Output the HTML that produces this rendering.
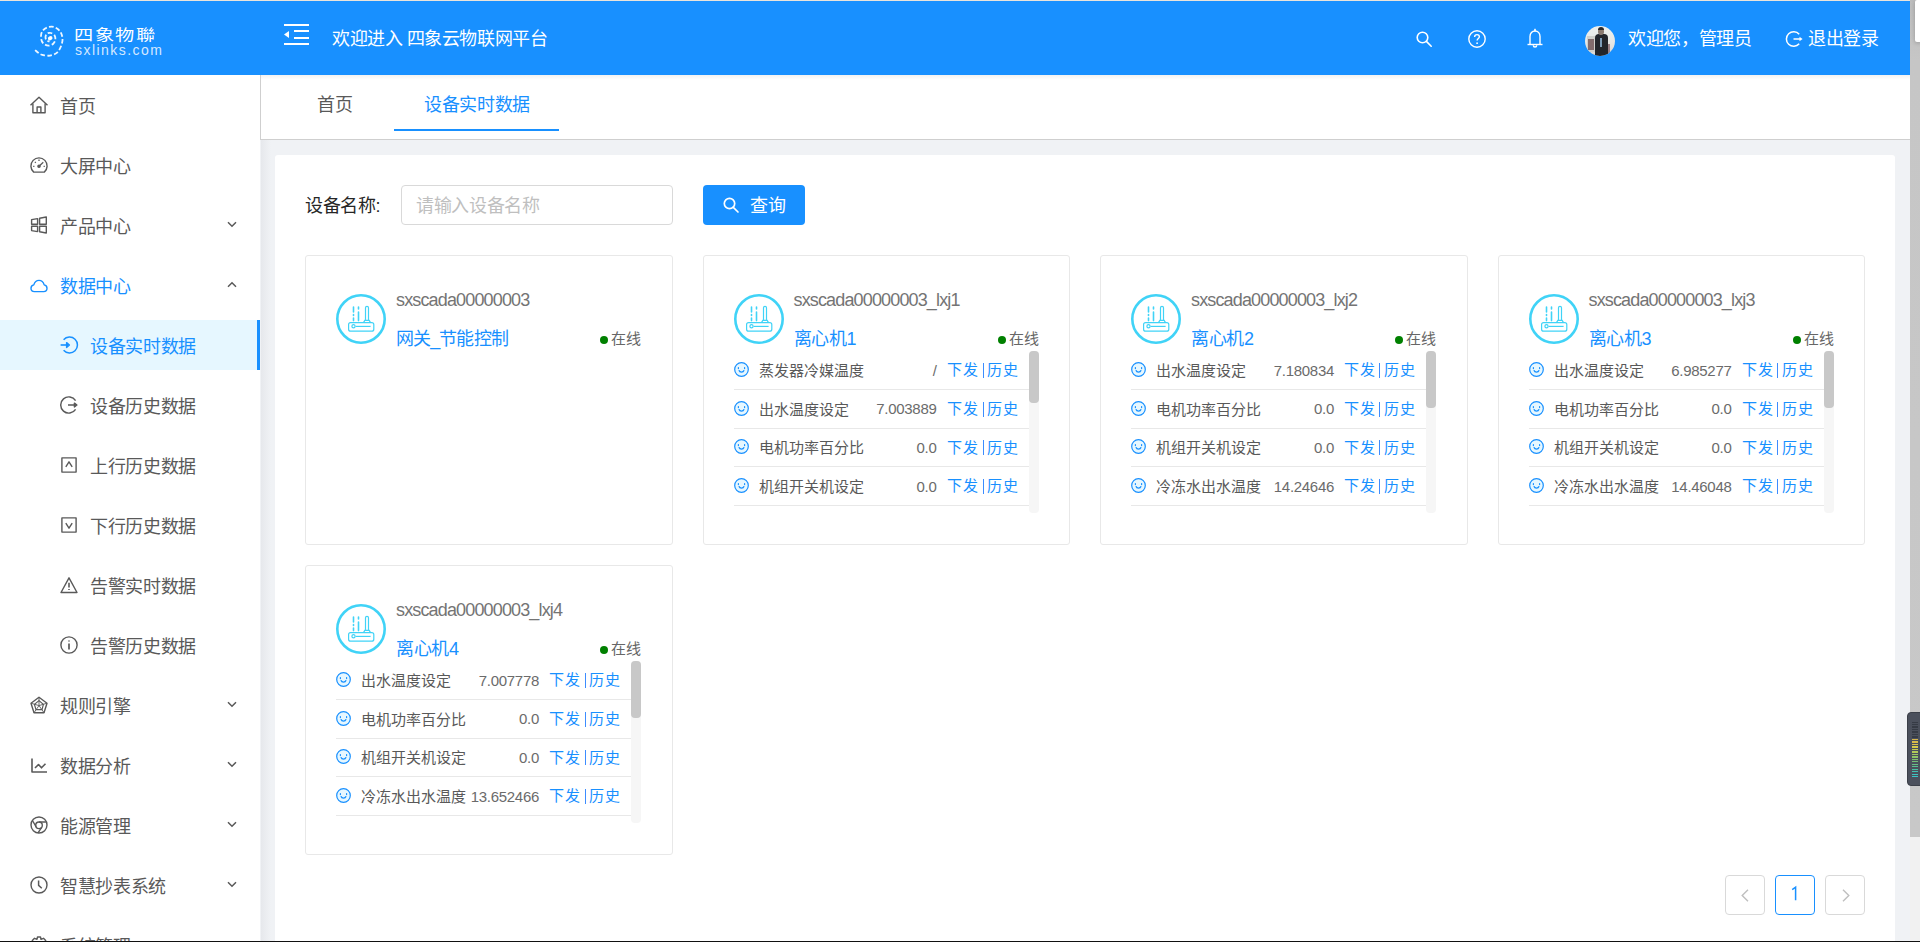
<!DOCTYPE html>
<html lang="zh-CN">
<head>
<meta charset="utf-8">
<style>
*{margin:0;padding:0;box-sizing:border-box}
html,body{width:1920px;height:942px;overflow:hidden;background:#f0f2f5;font-family:"Liberation Sans",sans-serif;color:#595959}
.abs{position:absolute}
.t{white-space:nowrap}
svg{position:absolute;overflow:visible}
</style>
</head>
<body>
<div class="abs" style="left:0;top:0;width:1910px;height:1px;background:#e9e4dc"></div>
<div class="abs" style="left:0;top:1px;width:1910px;height:74px;background:#1890ff"></div>
<div class="abs" style="left:0;top:75px;width:260px;height:867px;background:#fff"></div>
<div class="abs" style="left:260px;top:75px;width:1650px;height:65px;background:#fff;border-left:1px solid #cfcfcf;border-bottom:1px solid #cfcfcf"></div>
<div class="abs" style="left:261px;top:75px;width:1649px;height:5px;background:linear-gradient(180deg,#f2f2f2,#fff)"></div>
<div class="abs" style="left:261px;top:140px;width:10px;height:802px;background:linear-gradient(90deg,#e6e8ec,#f0f2f5)"></div>
<div class="abs" style="left:275px;top:155px;width:1620px;height:800px;background:#fff;border-radius:3px"></div>
<svg style="left:0;top:0" width="80" height="70" viewBox="0 0 80 70">
<path d="M35.1 50.1 C35.75 50.63 37.68 52.48 39 53.3 C40.32 54.12 41.17 54.62 43 55 C44.83 55.38 47.67 56.00 50 55.6 C52.33 55.20 55.12 54.28 57 52.6 C58.88 50.92 60.38 47.90 61.3 45.5 C62.22 43.10 62.72 40.58 62.5 38.2 C62.28 35.82 61.42 33.07 60 31.2 C58.58 29.33 56.17 27.62 54 27 C51.83 26.38 48.92 26.83 47 27.5 C45.08 28.17 43.50 29.58 42.5 31 C41.50 32.42 41.08 34.25 41 36 C40.92 37.75 41.33 40.07 42 41.5 C42.67 42.93 43.83 43.92 45 44.6 C46.17 45.28 47.67 45.70 49 45.6 C50.33 45.50 51.95 44.93 53 44 C54.05 43.07 55.03 41.42 55.3 40 C55.57 38.58 55.32 36.67 54.6 35.5 C53.88 34.33 52.27 33.33 51 33 C49.73 32.67 47.92 32.83 47 33.5 C46.08 34.17 45.58 35.87 45.5 37 C45.42 38.13 45.83 39.53 46.5 40.3 C47.17 41.07 49.00 41.38 49.5 41.6" fill="none" stroke="#fff" stroke-width="1.8" stroke-linecap="butt" stroke-dasharray="4.6 2.3" opacity="0.93"/>
<ellipse cx="50.2" cy="38.3" rx="2.4" ry="2" fill="#fff" transform="rotate(-30 50.2 38.3)"/>
</svg>
<div class="abs t" style="left:74px;top:27.5px;font-size:16px;line-height:16px;color:#fff;letter-spacing:1.2px;transform:scale(1.2,0.95);transform-origin:0 0">四象物聯</div>
<div class="abs t" style="left:75px;top:43px;font-size:14px;line-height:14px;color:rgba(255,255,255,.82);letter-spacing:1.45px">sxlinks.com</div>
<svg style="left:284px;top:23px" width="25" height="22" viewBox="0 0 25 22">
<g fill="#fff"><rect x="0" y="1" width="25" height="2"/><rect x="10" y="7" width="15" height="2"/><rect x="10" y="14" width="15" height="2"/><rect x="0" y="20" width="25" height="2"/>
<path d="M0 11.5 L5 8 L5 15 Z"/></g></svg>
<div class="abs t" style="left:332px;top:30.2px;font-size:18px;line-height:18px;color:#fff;letter-spacing:-0.35px;letter-spacing:-0.45px">欢迎进入 四象云物联网平台</div>
<svg style="left:1416px;top:31px" width="16" height="16" viewBox="0 0 16 16">
<g fill="none" stroke="#fff" stroke-width="1.6"><circle cx="6.5" cy="6.5" r="5.3"/><path d="M10.4 10.4 L15.2 15.2" stroke-linecap="round"/></g></svg>
<svg style="left:1468px;top:30px" width="18" height="18" viewBox="0 0 18 18">
<g fill="none" stroke="#fff" stroke-width="1.4"><circle cx="9" cy="9" r="8.2"/><path d="M6.6 7 C6.6 5.4 7.7 4.6 9 4.6 C10.4 4.6 11.4 5.5 11.4 6.8 C11.4 8.4 9.1 8.6 9.1 10.6"/></g>
<circle cx="9.1" cy="13.2" r="0.9" fill="#fff"/></svg>
<svg style="left:1527px;top:28px" width="16" height="20" viewBox="0 0 16 20">
<g fill="none" stroke="#fff" stroke-width="1.4"><path d="M3 16.5 L3 8.5 C3 5.2 5.2 3 8 3 C10.8 3 13 5.2 13 8.5 L13 16.5"/><path d="M0.5 16.5 L15.5 16.5"/><path d="M6.3 17.2 C6.3 18.3 7 19 8 19 C9 19 9.7 18.3 9.7 17.2"/></g>
<rect x="7.2" y="0.8" width="1.6" height="2.4" fill="#fff"/></svg>
<div class="abs" style="left:1585px;top:26px;width:30px;height:30px;border-radius:50%;overflow:hidden;background:linear-gradient(180deg,#eef0ee 0%,#e6e7e5 55%,#d9d5cf 100%)">
<div class="abs" style="left:2px;top:10px;width:10px;height:16px;background:#d0d0cc"></div>
<div class="abs" style="left:3px;top:13px;width:6px;height:11px;background:#6a4b4e;opacity:.75"></div>
<div class="abs" style="left:21px;top:18px;width:4px;height:10px;background:#7a5560;opacity:.7"></div>
<div class="abs" style="left:10px;top:8px;width:12.5px;height:23px;background:#22252b;border-radius:4px 4px 0 0"></div>
<div class="abs" style="left:15px;top:12px;width:2px;height:9px;background:#7d9cb8"></div>
<div class="abs" style="left:12.5px;top:1.5px;width:6px;height:7px;background:#8a7a70;border-radius:45%"></div>
<div class="abs" style="left:12.5px;top:1px;width:6px;height:3px;background:#2a2a2c;border-radius:3px 3px 0 0"></div>
</div>
<div class="abs t" style="left:1628px;top:30.0px;font-size:18px;line-height:18px;color:#fff;letter-spacing:-0.35px;">欢迎您，管理员</div>
<svg style="left:1785px;top:30px" width="18" height="18" viewBox="0 0 18 18">
<g fill="none" stroke="#fff" stroke-width="1.5"><path d="M14.2 4.2 A7.3 7.3 0 1 0 14.2 13.8"/><path d="M8.5 9 L15.5 9"/></g>
<path d="M14.5 6.8 L17.6 9 L14.5 11.2 Z" fill="#fff"/></svg>
<div class="abs t" style="left:1808px;top:30.2px;font-size:18px;line-height:18px;color:#fff;letter-spacing:-0.35px;">退出登录</div>
<div class="abs" style="left:0;top:320px;width:260px;height:50px;background:#e6f7ff"></div>
<div class="abs" style="left:257px;top:320px;width:3px;height:50px;background:#1890ff"></div>
<svg style="left:30px;top:96px" width="18" height="18" viewBox="0 0 18 18"><g fill="none" stroke="#595959" stroke-width="1.4" stroke-linejoin="round"><path d="M0.5 9.3 L9 1.3 L17.5 9.3"/><path d="M2.9 7.6 L2.9 16.7 L15.1 16.7 L15.1 7.6"/><path d="M7.1 16.7 L7.1 11 L10.9 11 L10.9 16.7"/></g></svg>
<div class="abs t" style="left:60px;top:97.7px;font-size:18px;line-height:18px;color:#595959;letter-spacing:-0.35px;">首页</div>
<svg style="left:30px;top:156px" width="18" height="18" viewBox="0 0 18 18"><g fill="none" stroke="#595959" stroke-width="1.4" stroke-linejoin="round"><path d="M3.7 16.1 A8.1 8.1 0 1 1 14.3 16.1 Z"/><path d="M9 10.3 L13.3 6.2" stroke-width="1.2"/><circle cx="9" cy="10.3" r="1.1" fill="#595959"/><path d="M9 3.6 L9 4.9 M3.2 10.3 L4.4 10.3 M13.6 10.3 L14.8 10.3 M4.9 5.9 L5.8 6.8" stroke-width="1.3"/></g></svg>
<div class="abs t" style="left:60px;top:157.7px;font-size:18px;line-height:18px;color:#595959;letter-spacing:-0.35px;">大屏中心</div>
<svg style="left:30px;top:216px" width="18" height="18" viewBox="0 0 18 18"><g fill="none" stroke="#595959" stroke-width="1.4" stroke-linejoin="round"><path d="M1.6 3.6 L7.6 2.6 L7.6 8.2 L1.6 8.2 Z"/><path d="M9.6 2.3 L16.3 1 L16.3 8.2 L9.6 8.2 Z"/><path d="M1.6 10.2 L7.6 10.2 L7.6 15.6 L1.6 14.6 Z"/><path d="M9.6 10.2 L16.3 10.2 L16.3 17 L9.6 15.8 Z"/></g></svg>
<div class="abs t" style="left:60px;top:217.7px;font-size:18px;line-height:18px;color:#595959;letter-spacing:-0.35px;">产品中心</div>
<svg style="left:227px;top:221px" width="10" height="7" viewBox="0 0 10 7"><path d="M1 1.2 L5 5.2 L9 1.2" fill="none" stroke="#595959" stroke-width="1.5"/></svg>
<svg style="left:30px;top:276px" width="18" height="18" viewBox="0 0 18 18"><g fill="none" stroke="#1890ff" stroke-width="1.4" stroke-linejoin="round"><path d="M4.4 15.6 C2.4 15.6 1 14.1 1 12.3 C1 10.5 2.3 9.2 3.8 8.9 C4.6 6.2 6.6 4.4 9 4.4 C11.4 4.4 13.4 6.2 14.2 8.9 C15.7 9.2 17 10.5 17 12.3 C17 14.1 15.6 15.6 13.6 15.6 Z"/></g></svg>
<div class="abs t" style="left:60px;top:277.7px;font-size:18px;line-height:18px;color:#1890ff;letter-spacing:-0.35px;">数据中心</div>
<svg style="left:227px;top:281px" width="10" height="7" viewBox="0 0 10 7"><path d="M1 5.8 L5 1.8 L9 5.8" fill="none" stroke="#595959" stroke-width="1.5"/></svg>
<svg style="left:60px;top:336px" width="18" height="18" viewBox="0 0 18 18"><g fill="none" stroke="#1890ff" stroke-width="1.4" stroke-linejoin="round"><path d="M3.6 3.8 A7.9 7.9 0 1 1 3.6 14.2" stroke-width="1.5"/><path d="M0.6 9 L7 9" stroke-width="1.6"/><path d="M6.6 6.6 L9.4 9 L6.6 11.4 Z" fill="#1890ff"/></g></svg>
<div class="abs t" style="left:90px;top:337.7px;font-size:18px;line-height:18px;color:#1890ff;letter-spacing:-0.35px;">设备实时数据</div>
<svg style="left:60px;top:396px" width="18" height="18" viewBox="0 0 18 18"><g fill="none" stroke="#595959" stroke-width="1.4" stroke-linejoin="round"><path d="M15.6 4.6 A8.1 8.1 0 1 0 15.6 13.4" stroke-width="1.45"/><path d="M8 9 L14.8 9" stroke-width="1.5"/><path d="M14.4 7.1 L16.9 9 L14.4 10.9 Z" fill="#595959"/></g></svg>
<div class="abs t" style="left:90px;top:397.7px;font-size:18px;line-height:18px;color:#595959;letter-spacing:-0.35px;">设备历史数据</div>
<svg style="left:60px;top:456px" width="18" height="18" viewBox="0 0 18 18"><g fill="none" stroke="#595959" stroke-width="1.4" stroke-linejoin="round"><rect x="1.9" y="1.9" width="14.2" height="14.2"/><path d="M5.8 10.8 L9 5.8 L12.2 10.8"/></g></svg>
<div class="abs t" style="left:90px;top:457.7px;font-size:18px;line-height:18px;color:#595959;letter-spacing:-0.35px;">上行历史数据</div>
<svg style="left:60px;top:516px" width="18" height="18" viewBox="0 0 18 18"><g fill="none" stroke="#595959" stroke-width="1.4" stroke-linejoin="round"><rect x="1.9" y="1.9" width="14.2" height="14.2"/><path d="M5.8 7.2 L9 12.2 L12.2 7.2"/></g></svg>
<div class="abs t" style="left:90px;top:517.7px;font-size:18px;line-height:18px;color:#595959;letter-spacing:-0.35px;">下行历史数据</div>
<svg style="left:60px;top:576px" width="18" height="18" viewBox="0 0 18 18"><g fill="none" stroke="#595959" stroke-width="1.4" stroke-linejoin="round"><path d="M9 1.8 L17 16.5 L1 16.5 Z"/><path d="M9 6.8 L9 11.4" stroke-width="1.6"/><path d="M9 12.9 L9 14" stroke-width="1.6"/></g></svg>
<div class="abs t" style="left:90px;top:577.7px;font-size:18px;line-height:18px;color:#595959;letter-spacing:-0.35px;">告警实时数据</div>
<svg style="left:60px;top:636px" width="18" height="18" viewBox="0 0 18 18"><g fill="none" stroke="#595959" stroke-width="1.4" stroke-linejoin="round"><circle cx="9" cy="9" r="8.1"/><path d="M9 7.5 L9 13.5" stroke-width="1.7"/><path d="M9 4.6 L9 5.6" stroke-width="1.7"/></g></svg>
<div class="abs t" style="left:90px;top:637.7px;font-size:18px;line-height:18px;color:#595959;letter-spacing:-0.35px;">告警历史数据</div>
<svg style="left:30px;top:696px" width="18" height="18" viewBox="0 0 18 18"><g fill="none" stroke="#595959" stroke-width="1.4" stroke-linejoin="round"><path d="M9 1.3 L17 7.2 L14 16.7 L4 16.7 L1 7.2 Z" stroke-width="1.4"/><path d="M9 4.6 L13.4 8.4 L12 13.6 L6 13.6 L4.4 8.4 Z" stroke-width="1.2"/><path d="M9 9.6 L9 1.3 M9 9.6 L17 7.2 M9 9.6 L14 16.7 M9 9.6 L4 16.7 M9 9.6 L1 7.2" stroke-width="0.9"/></g></svg>
<div class="abs t" style="left:60px;top:697.7px;font-size:18px;line-height:18px;color:#595959;letter-spacing:-0.35px;">规则引擎</div>
<svg style="left:227px;top:701px" width="10" height="7" viewBox="0 0 10 7"><path d="M1 1.2 L5 5.2 L9 1.2" fill="none" stroke="#595959" stroke-width="1.5"/></svg>
<svg style="left:30px;top:756px" width="18" height="18" viewBox="0 0 18 18"><g fill="none" stroke="#595959" stroke-width="1.4" stroke-linejoin="round"><path d="M2 2.5 L2 16 L17 16" stroke-width="1.6"/><path d="M5 12 L8.5 8.5 L11.5 11.8 L15.5 7.8" stroke-width="1.6"/></g></svg>
<div class="abs t" style="left:60px;top:757.7px;font-size:18px;line-height:18px;color:#595959;letter-spacing:-0.35px;">数据分析</div>
<svg style="left:227px;top:761px" width="10" height="7" viewBox="0 0 10 7"><path d="M1 1.2 L5 5.2 L9 1.2" fill="none" stroke="#595959" stroke-width="1.5"/></svg>
<svg style="left:30px;top:816px" width="18" height="18" viewBox="0 0 18 18"><g fill="none" stroke="#595959" stroke-width="1.4" stroke-linejoin="round"><circle cx="9" cy="9" r="8"/><circle cx="9" cy="9.3" r="3.3"/><path d="M9 6 L15.9 6 M6.2 10.8 L2.4 4.5 M11.5 11.6 L8 16.9"/></g></svg>
<div class="abs t" style="left:60px;top:817.7px;font-size:18px;line-height:18px;color:#595959;letter-spacing:-0.35px;">能源管理</div>
<svg style="left:227px;top:821px" width="10" height="7" viewBox="0 0 10 7"><path d="M1 1.2 L5 5.2 L9 1.2" fill="none" stroke="#595959" stroke-width="1.5"/></svg>
<svg style="left:30px;top:876px" width="18" height="18" viewBox="0 0 18 18"><g fill="none" stroke="#595959" stroke-width="1.4" stroke-linejoin="round"><circle cx="9" cy="9" r="8"/><path d="M8.6 4.6 L8.6 9.4 L11.8 12.2" stroke-width="1.5"/></g></svg>
<div class="abs t" style="left:60px;top:877.7px;font-size:18px;line-height:18px;color:#595959;letter-spacing:-0.35px;">智慧抄表系统</div>
<svg style="left:227px;top:881px" width="10" height="7" viewBox="0 0 10 7"><path d="M1 1.2 L5 5.2 L9 1.2" fill="none" stroke="#595959" stroke-width="1.5"/></svg>
<svg style="left:30px;top:936px" width="18" height="18" viewBox="0 0 18 18"><g fill="none" stroke="#595959" stroke-width="1.4" stroke-linejoin="round"><circle cx="9" cy="9" r="3"/><path d="M7.5 1 L10.5 1 L11 3.3 L13.5 2.3 L15.7 4.5 L14.7 7 L17 7.5 L17 10.5 L14.7 11 L15.7 13.5 L13.5 15.7 L11 14.7 L10.5 17 L7.5 17 L7 14.7 L4.5 15.7 L2.3 13.5 L3.3 11 L1 10.5 L1 7.5 L3.3 7 L2.3 4.5 L4.5 2.3 L7 3.3 Z"/></g></svg>
<div class="abs t" style="left:60px;top:937.7px;font-size:18px;line-height:18px;color:#595959;letter-spacing:-0.35px;">系统管理</div>
<svg style="left:227px;top:941px" width="10" height="7" viewBox="0 0 10 7"><path d="M1 1.2 L5 5.2 L9 1.2" fill="none" stroke="#595959" stroke-width="1.5"/></svg>
<div class="abs t" style="left:317px;top:96.4px;font-size:18px;line-height:18px;color:#595959;letter-spacing:-0.35px;">首页</div>
<div class="abs t" style="left:424px;top:96.4px;font-size:18px;line-height:18px;color:#1890ff;letter-spacing:-0.35px;">设备实时数据</div>
<div class="abs" style="left:394px;top:129px;width:165px;height:2px;background:#1890ff"></div>
<div class="abs t" style="left:305px;top:197.1px;font-size:18px;line-height:18px;color:#262626;letter-spacing:-0.35px;">设备名称:</div>
<div class="abs" style="left:401px;top:185px;width:272px;height:40px;border:1px solid #d9d9d9;border-radius:4px;background:#fff"></div>
<div class="abs t" style="left:416px;top:197.2px;font-size:18px;line-height:18px;color:#bfbfbf;letter-spacing:-0.35px;">请输入设备名称</div>
<div class="abs" style="left:703px;top:185px;width:102px;height:40px;border-radius:4px;background:#1890ff"></div>
<svg style="left:723px;top:197px" width="16" height="16" viewBox="0 0 16 16">
<g fill="none" stroke="#fff" stroke-width="1.7"><circle cx="6.5" cy="6.5" r="5.2"/><path d="M10.3 10.3 L15 15" stroke-linecap="round"/></g></svg>
<div class="abs t" style="left:750px;top:197.2px;font-size:18px;line-height:18px;color:#fff;letter-spacing:-0.35px;">查询</div>
<div class="abs" style="left:305px;top:255px;width:367.5px;height:290px;border:1px solid #e8e8e8;border-radius:3px;background:#fff"></div>
<svg style="left:336px;top:294px" width="50" height="50" viewBox="0 0 50 50">
<circle cx="25" cy="25" r="23.7" fill="none" stroke="#40d3f7" stroke-width="2.6"/>
<g fill="none" stroke="#40d3f7" stroke-width="1.2">
<rect x="12.6" y="28.6" width="25.2" height="8.6" rx="2"/>
<circle cx="17.5" cy="32.3" r="1.6"/><path d="M19.6 32.4 L34.6 32.4"/>
<path d="M29.5 26.4 L29.5 13.8 A1.5 1.5 0 0 1 32.5 13.8 L32.5 26.4"/>
<path d="M27.5 28.6 L28.8 26.4 L33.2 26.4 L34.5 28.6"/>
</g>
<g stroke="#40d3f7" stroke-width="1.6" stroke-linecap="round">
<path d="M17.5 13 L17.5 18 M17.5 20.5 L17.5 21.5 M17.5 24 L17.5 26.6"/>
<path d="M22.5 13 L22.5 15 M22.5 18 L22.5 26.6"/>
</g></svg>
<div class="abs t" style="left:396px;top:291px;font-size:18px;line-height:18px;color:#747474;letter-spacing:-0.85px">sxscada00000003</div>
<div class="abs t" style="left:396px;top:329.5px;font-size:18px;line-height:18px;color:#1890ff;letter-spacing:-0.35px;letter-spacing:-0.9px">网关_节能控制</div>
<div class="abs" style="left:600px;top:336px;width:8px;height:8px;border-radius:50%;background:#008000"></div>
<div class="abs t" style="left:611px;top:330.8px;font-size:15px;line-height:15px;color:#666;">在线</div>
<div class="abs" style="left:702.5px;top:255px;width:367.5px;height:290px;border:1px solid #e8e8e8;border-radius:3px;background:#fff"></div>
<svg style="left:733.5px;top:294px" width="50" height="50" viewBox="0 0 50 50">
<circle cx="25" cy="25" r="23.7" fill="none" stroke="#40d3f7" stroke-width="2.6"/>
<g fill="none" stroke="#40d3f7" stroke-width="1.2">
<rect x="12.6" y="28.6" width="25.2" height="8.6" rx="2"/>
<circle cx="17.5" cy="32.3" r="1.6"/><path d="M19.6 32.4 L34.6 32.4"/>
<path d="M29.5 26.4 L29.5 13.8 A1.5 1.5 0 0 1 32.5 13.8 L32.5 26.4"/>
<path d="M27.5 28.6 L28.8 26.4 L33.2 26.4 L34.5 28.6"/>
</g>
<g stroke="#40d3f7" stroke-width="1.6" stroke-linecap="round">
<path d="M17.5 13 L17.5 18 M17.5 20.5 L17.5 21.5 M17.5 24 L17.5 26.6"/>
<path d="M22.5 13 L22.5 15 M22.5 18 L22.5 26.6"/>
</g></svg>
<div class="abs t" style="left:793.5px;top:291px;font-size:18px;line-height:18px;color:#747474;letter-spacing:-0.85px">sxscada00000003_lxj1</div>
<div class="abs t" style="left:793.5px;top:329.5px;font-size:18px;line-height:18px;color:#1890ff;letter-spacing:-0.35px;">离心机1</div>
<div class="abs" style="left:997.5px;top:336px;width:8px;height:8px;border-radius:50%;background:#008000"></div>
<div class="abs t" style="left:1008.5px;top:330.8px;font-size:15px;line-height:15px;color:#666;">在线</div>
<div class="abs" style="left:1028.5px;top:351px;width:10px;height:162px;background:#f6f6f6;border-radius:4px"></div>
<div class="abs" style="left:1028.5px;top:351px;width:10px;height:52px;background:#c8c8c8;border-radius:4px"></div>
<svg style="left:733.5px;top:362.0px" width="15" height="15" viewBox="0 0 15 15">
<circle cx="7.5" cy="7.5" r="6.8" fill="#e6f7ff" stroke="#1890ff" stroke-width="1.2"/>
<path d="M4.4 5.5 L4.4 6.6 M10.6 5.5 L10.6 6.6" stroke="#1890ff" stroke-width="1.2" stroke-linecap="round"/>
<path d="M5.1 8.5 C5.6 10.6 9.4 10.6 9.9 8.5" fill="none" stroke="#1890ff" stroke-width="1.2" stroke-linecap="round"/></svg>
<div class="abs t" style="left:758.5px;top:362.9px;font-size:15px;line-height:15px;color:#595959;">蒸发器冷媒温度</div>
<div class="abs t" style="left:836.5px;top:362.5px;width:100px;text-align:right;font-size:15px;line-height:15px;color:#6b6b6b;letter-spacing:-0.3px">/</div>
<div class="abs t" style="left:946.5px;top:362.3px;font-size:15px;line-height:15px;color:#1890ff;letter-spacing:1.2px">下发</div>
<div class="abs" style="left:983px;top:363.0px;width:1px;height:15px;background:#3d8cff"></div>
<div class="abs t" style="left:986.5px;top:362.3px;font-size:15px;line-height:15px;color:#1890ff;letter-spacing:1.2px">历史</div>
<div class="abs" style="left:733.5px;top:389.0px;width:295px;height:1px;background:#e8e8e8"></div>
<svg style="left:733.5px;top:400.67px" width="15" height="15" viewBox="0 0 15 15">
<circle cx="7.5" cy="7.5" r="6.8" fill="#e6f7ff" stroke="#1890ff" stroke-width="1.2"/>
<path d="M4.4 5.5 L4.4 6.6 M10.6 5.5 L10.6 6.6" stroke="#1890ff" stroke-width="1.2" stroke-linecap="round"/>
<path d="M5.1 8.5 C5.6 10.6 9.4 10.6 9.9 8.5" fill="none" stroke="#1890ff" stroke-width="1.2" stroke-linecap="round"/></svg>
<div class="abs t" style="left:758.5px;top:401.6px;font-size:15px;line-height:15px;color:#595959;">出水温度设定</div>
<div class="abs t" style="left:836.5px;top:401.2px;width:100px;text-align:right;font-size:15px;line-height:15px;color:#6b6b6b;letter-spacing:-0.3px">7.003889</div>
<div class="abs t" style="left:946.5px;top:401.0px;font-size:15px;line-height:15px;color:#1890ff;letter-spacing:1.2px">下发</div>
<div class="abs" style="left:983px;top:401.7px;width:1px;height:15px;background:#3d8cff"></div>
<div class="abs t" style="left:986.5px;top:401.0px;font-size:15px;line-height:15px;color:#1890ff;letter-spacing:1.2px">历史</div>
<div class="abs" style="left:733.5px;top:427.7px;width:295px;height:1px;background:#e8e8e8"></div>
<svg style="left:733.5px;top:439.34000000000003px" width="15" height="15" viewBox="0 0 15 15">
<circle cx="7.5" cy="7.5" r="6.8" fill="#e6f7ff" stroke="#1890ff" stroke-width="1.2"/>
<path d="M4.4 5.5 L4.4 6.6 M10.6 5.5 L10.6 6.6" stroke="#1890ff" stroke-width="1.2" stroke-linecap="round"/>
<path d="M5.1 8.5 C5.6 10.6 9.4 10.6 9.9 8.5" fill="none" stroke="#1890ff" stroke-width="1.2" stroke-linecap="round"/></svg>
<div class="abs t" style="left:758.5px;top:440.2px;font-size:15px;line-height:15px;color:#595959;">电机功率百分比</div>
<div class="abs t" style="left:836.5px;top:439.8px;width:100px;text-align:right;font-size:15px;line-height:15px;color:#6b6b6b;letter-spacing:-0.3px">0.0</div>
<div class="abs t" style="left:946.5px;top:439.6px;font-size:15px;line-height:15px;color:#1890ff;letter-spacing:1.2px">下发</div>
<div class="abs" style="left:983px;top:440.3px;width:1px;height:15px;background:#3d8cff"></div>
<div class="abs t" style="left:986.5px;top:439.6px;font-size:15px;line-height:15px;color:#1890ff;letter-spacing:1.2px">历史</div>
<div class="abs" style="left:733.5px;top:466.3px;width:295px;height:1px;background:#e8e8e8"></div>
<svg style="left:733.5px;top:478.01px" width="15" height="15" viewBox="0 0 15 15">
<circle cx="7.5" cy="7.5" r="6.8" fill="#e6f7ff" stroke="#1890ff" stroke-width="1.2"/>
<path d="M4.4 5.5 L4.4 6.6 M10.6 5.5 L10.6 6.6" stroke="#1890ff" stroke-width="1.2" stroke-linecap="round"/>
<path d="M5.1 8.5 C5.6 10.6 9.4 10.6 9.9 8.5" fill="none" stroke="#1890ff" stroke-width="1.2" stroke-linecap="round"/></svg>
<div class="abs t" style="left:758.5px;top:478.9px;font-size:15px;line-height:15px;color:#595959;">机组开关机设定</div>
<div class="abs t" style="left:836.5px;top:478.5px;width:100px;text-align:right;font-size:15px;line-height:15px;color:#6b6b6b;letter-spacing:-0.3px">0.0</div>
<div class="abs t" style="left:946.5px;top:478.3px;font-size:15px;line-height:15px;color:#1890ff;letter-spacing:1.2px">下发</div>
<div class="abs" style="left:983px;top:479.0px;width:1px;height:15px;background:#3d8cff"></div>
<div class="abs t" style="left:986.5px;top:478.3px;font-size:15px;line-height:15px;color:#1890ff;letter-spacing:1.2px">历史</div>
<div class="abs" style="left:733.5px;top:505.0px;width:295px;height:1px;background:#e8e8e8"></div>
<div class="abs" style="left:1100px;top:255px;width:367.5px;height:290px;border:1px solid #e8e8e8;border-radius:3px;background:#fff"></div>
<svg style="left:1131px;top:294px" width="50" height="50" viewBox="0 0 50 50">
<circle cx="25" cy="25" r="23.7" fill="none" stroke="#40d3f7" stroke-width="2.6"/>
<g fill="none" stroke="#40d3f7" stroke-width="1.2">
<rect x="12.6" y="28.6" width="25.2" height="8.6" rx="2"/>
<circle cx="17.5" cy="32.3" r="1.6"/><path d="M19.6 32.4 L34.6 32.4"/>
<path d="M29.5 26.4 L29.5 13.8 A1.5 1.5 0 0 1 32.5 13.8 L32.5 26.4"/>
<path d="M27.5 28.6 L28.8 26.4 L33.2 26.4 L34.5 28.6"/>
</g>
<g stroke="#40d3f7" stroke-width="1.6" stroke-linecap="round">
<path d="M17.5 13 L17.5 18 M17.5 20.5 L17.5 21.5 M17.5 24 L17.5 26.6"/>
<path d="M22.5 13 L22.5 15 M22.5 18 L22.5 26.6"/>
</g></svg>
<div class="abs t" style="left:1191px;top:291px;font-size:18px;line-height:18px;color:#747474;letter-spacing:-0.85px">sxscada00000003_lxj2</div>
<div class="abs t" style="left:1191px;top:329.5px;font-size:18px;line-height:18px;color:#1890ff;letter-spacing:-0.35px;">离心机2</div>
<div class="abs" style="left:1395px;top:336px;width:8px;height:8px;border-radius:50%;background:#008000"></div>
<div class="abs t" style="left:1406px;top:330.8px;font-size:15px;line-height:15px;color:#666;">在线</div>
<div class="abs" style="left:1426px;top:351px;width:10px;height:162px;background:#f6f6f6;border-radius:4px"></div>
<div class="abs" style="left:1426px;top:351px;width:10px;height:57px;background:#c8c8c8;border-radius:4px"></div>
<svg style="left:1131px;top:362.0px" width="15" height="15" viewBox="0 0 15 15">
<circle cx="7.5" cy="7.5" r="6.8" fill="#e6f7ff" stroke="#1890ff" stroke-width="1.2"/>
<path d="M4.4 5.5 L4.4 6.6 M10.6 5.5 L10.6 6.6" stroke="#1890ff" stroke-width="1.2" stroke-linecap="round"/>
<path d="M5.1 8.5 C5.6 10.6 9.4 10.6 9.9 8.5" fill="none" stroke="#1890ff" stroke-width="1.2" stroke-linecap="round"/></svg>
<div class="abs t" style="left:1156px;top:362.9px;font-size:15px;line-height:15px;color:#595959;">出水温度设定</div>
<div class="abs t" style="left:1234px;top:362.5px;width:100px;text-align:right;font-size:15px;line-height:15px;color:#6b6b6b;letter-spacing:-0.3px">7.180834</div>
<div class="abs t" style="left:1344px;top:362.3px;font-size:15px;line-height:15px;color:#1890ff;letter-spacing:1.2px">下发</div>
<div class="abs" style="left:1379px;top:363.0px;width:1px;height:15px;background:#3d8cff"></div>
<div class="abs t" style="left:1384px;top:362.3px;font-size:15px;line-height:15px;color:#1890ff;letter-spacing:1.2px">历史</div>
<div class="abs" style="left:1131px;top:389.0px;width:295px;height:1px;background:#e8e8e8"></div>
<svg style="left:1131px;top:400.67px" width="15" height="15" viewBox="0 0 15 15">
<circle cx="7.5" cy="7.5" r="6.8" fill="#e6f7ff" stroke="#1890ff" stroke-width="1.2"/>
<path d="M4.4 5.5 L4.4 6.6 M10.6 5.5 L10.6 6.6" stroke="#1890ff" stroke-width="1.2" stroke-linecap="round"/>
<path d="M5.1 8.5 C5.6 10.6 9.4 10.6 9.9 8.5" fill="none" stroke="#1890ff" stroke-width="1.2" stroke-linecap="round"/></svg>
<div class="abs t" style="left:1156px;top:401.6px;font-size:15px;line-height:15px;color:#595959;">电机功率百分比</div>
<div class="abs t" style="left:1234px;top:401.2px;width:100px;text-align:right;font-size:15px;line-height:15px;color:#6b6b6b;letter-spacing:-0.3px">0.0</div>
<div class="abs t" style="left:1344px;top:401.0px;font-size:15px;line-height:15px;color:#1890ff;letter-spacing:1.2px">下发</div>
<div class="abs" style="left:1379px;top:401.7px;width:1px;height:15px;background:#3d8cff"></div>
<div class="abs t" style="left:1384px;top:401.0px;font-size:15px;line-height:15px;color:#1890ff;letter-spacing:1.2px">历史</div>
<div class="abs" style="left:1131px;top:427.7px;width:295px;height:1px;background:#e8e8e8"></div>
<svg style="left:1131px;top:439.34000000000003px" width="15" height="15" viewBox="0 0 15 15">
<circle cx="7.5" cy="7.5" r="6.8" fill="#e6f7ff" stroke="#1890ff" stroke-width="1.2"/>
<path d="M4.4 5.5 L4.4 6.6 M10.6 5.5 L10.6 6.6" stroke="#1890ff" stroke-width="1.2" stroke-linecap="round"/>
<path d="M5.1 8.5 C5.6 10.6 9.4 10.6 9.9 8.5" fill="none" stroke="#1890ff" stroke-width="1.2" stroke-linecap="round"/></svg>
<div class="abs t" style="left:1156px;top:440.2px;font-size:15px;line-height:15px;color:#595959;">机组开关机设定</div>
<div class="abs t" style="left:1234px;top:439.8px;width:100px;text-align:right;font-size:15px;line-height:15px;color:#6b6b6b;letter-spacing:-0.3px">0.0</div>
<div class="abs t" style="left:1344px;top:439.6px;font-size:15px;line-height:15px;color:#1890ff;letter-spacing:1.2px">下发</div>
<div class="abs" style="left:1379px;top:440.3px;width:1px;height:15px;background:#3d8cff"></div>
<div class="abs t" style="left:1384px;top:439.6px;font-size:15px;line-height:15px;color:#1890ff;letter-spacing:1.2px">历史</div>
<div class="abs" style="left:1131px;top:466.3px;width:295px;height:1px;background:#e8e8e8"></div>
<svg style="left:1131px;top:478.01px" width="15" height="15" viewBox="0 0 15 15">
<circle cx="7.5" cy="7.5" r="6.8" fill="#e6f7ff" stroke="#1890ff" stroke-width="1.2"/>
<path d="M4.4 5.5 L4.4 6.6 M10.6 5.5 L10.6 6.6" stroke="#1890ff" stroke-width="1.2" stroke-linecap="round"/>
<path d="M5.1 8.5 C5.6 10.6 9.4 10.6 9.9 8.5" fill="none" stroke="#1890ff" stroke-width="1.2" stroke-linecap="round"/></svg>
<div class="abs t" style="left:1156px;top:478.9px;font-size:15px;line-height:15px;color:#595959;">冷冻水出水温度</div>
<div class="abs t" style="left:1234px;top:478.5px;width:100px;text-align:right;font-size:15px;line-height:15px;color:#6b6b6b;letter-spacing:-0.3px">14.24646</div>
<div class="abs t" style="left:1344px;top:478.3px;font-size:15px;line-height:15px;color:#1890ff;letter-spacing:1.2px">下发</div>
<div class="abs" style="left:1379px;top:479.0px;width:1px;height:15px;background:#3d8cff"></div>
<div class="abs t" style="left:1384px;top:478.3px;font-size:15px;line-height:15px;color:#1890ff;letter-spacing:1.2px">历史</div>
<div class="abs" style="left:1131px;top:505.0px;width:295px;height:1px;background:#e8e8e8"></div>
<div class="abs" style="left:1497.5px;top:255px;width:367.5px;height:290px;border:1px solid #e8e8e8;border-radius:3px;background:#fff"></div>
<svg style="left:1528.5px;top:294px" width="50" height="50" viewBox="0 0 50 50">
<circle cx="25" cy="25" r="23.7" fill="none" stroke="#40d3f7" stroke-width="2.6"/>
<g fill="none" stroke="#40d3f7" stroke-width="1.2">
<rect x="12.6" y="28.6" width="25.2" height="8.6" rx="2"/>
<circle cx="17.5" cy="32.3" r="1.6"/><path d="M19.6 32.4 L34.6 32.4"/>
<path d="M29.5 26.4 L29.5 13.8 A1.5 1.5 0 0 1 32.5 13.8 L32.5 26.4"/>
<path d="M27.5 28.6 L28.8 26.4 L33.2 26.4 L34.5 28.6"/>
</g>
<g stroke="#40d3f7" stroke-width="1.6" stroke-linecap="round">
<path d="M17.5 13 L17.5 18 M17.5 20.5 L17.5 21.5 M17.5 24 L17.5 26.6"/>
<path d="M22.5 13 L22.5 15 M22.5 18 L22.5 26.6"/>
</g></svg>
<div class="abs t" style="left:1588.5px;top:291px;font-size:18px;line-height:18px;color:#747474;letter-spacing:-0.85px">sxscada00000003_lxj3</div>
<div class="abs t" style="left:1588.5px;top:329.5px;font-size:18px;line-height:18px;color:#1890ff;letter-spacing:-0.35px;">离心机3</div>
<div class="abs" style="left:1792.5px;top:336px;width:8px;height:8px;border-radius:50%;background:#008000"></div>
<div class="abs t" style="left:1803.5px;top:330.8px;font-size:15px;line-height:15px;color:#666;">在线</div>
<div class="abs" style="left:1823.5px;top:351px;width:10px;height:162px;background:#f6f6f6;border-radius:4px"></div>
<div class="abs" style="left:1823.5px;top:351px;width:10px;height:57px;background:#c8c8c8;border-radius:4px"></div>
<svg style="left:1528.5px;top:362.0px" width="15" height="15" viewBox="0 0 15 15">
<circle cx="7.5" cy="7.5" r="6.8" fill="#e6f7ff" stroke="#1890ff" stroke-width="1.2"/>
<path d="M4.4 5.5 L4.4 6.6 M10.6 5.5 L10.6 6.6" stroke="#1890ff" stroke-width="1.2" stroke-linecap="round"/>
<path d="M5.1 8.5 C5.6 10.6 9.4 10.6 9.9 8.5" fill="none" stroke="#1890ff" stroke-width="1.2" stroke-linecap="round"/></svg>
<div class="abs t" style="left:1553.5px;top:362.9px;font-size:15px;line-height:15px;color:#595959;">出水温度设定</div>
<div class="abs t" style="left:1631.5px;top:362.5px;width:100px;text-align:right;font-size:15px;line-height:15px;color:#6b6b6b;letter-spacing:-0.3px">6.985277</div>
<div class="abs t" style="left:1741.5px;top:362.3px;font-size:15px;line-height:15px;color:#1890ff;letter-spacing:1.2px">下发</div>
<div class="abs" style="left:1777px;top:363.0px;width:1px;height:15px;background:#3d8cff"></div>
<div class="abs t" style="left:1781.5px;top:362.3px;font-size:15px;line-height:15px;color:#1890ff;letter-spacing:1.2px">历史</div>
<div class="abs" style="left:1528.5px;top:389.0px;width:295px;height:1px;background:#e8e8e8"></div>
<svg style="left:1528.5px;top:400.67px" width="15" height="15" viewBox="0 0 15 15">
<circle cx="7.5" cy="7.5" r="6.8" fill="#e6f7ff" stroke="#1890ff" stroke-width="1.2"/>
<path d="M4.4 5.5 L4.4 6.6 M10.6 5.5 L10.6 6.6" stroke="#1890ff" stroke-width="1.2" stroke-linecap="round"/>
<path d="M5.1 8.5 C5.6 10.6 9.4 10.6 9.9 8.5" fill="none" stroke="#1890ff" stroke-width="1.2" stroke-linecap="round"/></svg>
<div class="abs t" style="left:1553.5px;top:401.6px;font-size:15px;line-height:15px;color:#595959;">电机功率百分比</div>
<div class="abs t" style="left:1631.5px;top:401.2px;width:100px;text-align:right;font-size:15px;line-height:15px;color:#6b6b6b;letter-spacing:-0.3px">0.0</div>
<div class="abs t" style="left:1741.5px;top:401.0px;font-size:15px;line-height:15px;color:#1890ff;letter-spacing:1.2px">下发</div>
<div class="abs" style="left:1777px;top:401.7px;width:1px;height:15px;background:#3d8cff"></div>
<div class="abs t" style="left:1781.5px;top:401.0px;font-size:15px;line-height:15px;color:#1890ff;letter-spacing:1.2px">历史</div>
<div class="abs" style="left:1528.5px;top:427.7px;width:295px;height:1px;background:#e8e8e8"></div>
<svg style="left:1528.5px;top:439.34000000000003px" width="15" height="15" viewBox="0 0 15 15">
<circle cx="7.5" cy="7.5" r="6.8" fill="#e6f7ff" stroke="#1890ff" stroke-width="1.2"/>
<path d="M4.4 5.5 L4.4 6.6 M10.6 5.5 L10.6 6.6" stroke="#1890ff" stroke-width="1.2" stroke-linecap="round"/>
<path d="M5.1 8.5 C5.6 10.6 9.4 10.6 9.9 8.5" fill="none" stroke="#1890ff" stroke-width="1.2" stroke-linecap="round"/></svg>
<div class="abs t" style="left:1553.5px;top:440.2px;font-size:15px;line-height:15px;color:#595959;">机组开关机设定</div>
<div class="abs t" style="left:1631.5px;top:439.8px;width:100px;text-align:right;font-size:15px;line-height:15px;color:#6b6b6b;letter-spacing:-0.3px">0.0</div>
<div class="abs t" style="left:1741.5px;top:439.6px;font-size:15px;line-height:15px;color:#1890ff;letter-spacing:1.2px">下发</div>
<div class="abs" style="left:1777px;top:440.3px;width:1px;height:15px;background:#3d8cff"></div>
<div class="abs t" style="left:1781.5px;top:439.6px;font-size:15px;line-height:15px;color:#1890ff;letter-spacing:1.2px">历史</div>
<div class="abs" style="left:1528.5px;top:466.3px;width:295px;height:1px;background:#e8e8e8"></div>
<svg style="left:1528.5px;top:478.01px" width="15" height="15" viewBox="0 0 15 15">
<circle cx="7.5" cy="7.5" r="6.8" fill="#e6f7ff" stroke="#1890ff" stroke-width="1.2"/>
<path d="M4.4 5.5 L4.4 6.6 M10.6 5.5 L10.6 6.6" stroke="#1890ff" stroke-width="1.2" stroke-linecap="round"/>
<path d="M5.1 8.5 C5.6 10.6 9.4 10.6 9.9 8.5" fill="none" stroke="#1890ff" stroke-width="1.2" stroke-linecap="round"/></svg>
<div class="abs t" style="left:1553.5px;top:478.9px;font-size:15px;line-height:15px;color:#595959;">冷冻水出水温度</div>
<div class="abs t" style="left:1631.5px;top:478.5px;width:100px;text-align:right;font-size:15px;line-height:15px;color:#6b6b6b;letter-spacing:-0.3px">14.46048</div>
<div class="abs t" style="left:1741.5px;top:478.3px;font-size:15px;line-height:15px;color:#1890ff;letter-spacing:1.2px">下发</div>
<div class="abs" style="left:1777px;top:479.0px;width:1px;height:15px;background:#3d8cff"></div>
<div class="abs t" style="left:1781.5px;top:478.3px;font-size:15px;line-height:15px;color:#1890ff;letter-spacing:1.2px">历史</div>
<div class="abs" style="left:1528.5px;top:505.0px;width:295px;height:1px;background:#e8e8e8"></div>
<div class="abs" style="left:305px;top:565px;width:367.5px;height:290px;border:1px solid #e8e8e8;border-radius:3px;background:#fff"></div>
<svg style="left:336px;top:604px" width="50" height="50" viewBox="0 0 50 50">
<circle cx="25" cy="25" r="23.7" fill="none" stroke="#40d3f7" stroke-width="2.6"/>
<g fill="none" stroke="#40d3f7" stroke-width="1.2">
<rect x="12.6" y="28.6" width="25.2" height="8.6" rx="2"/>
<circle cx="17.5" cy="32.3" r="1.6"/><path d="M19.6 32.4 L34.6 32.4"/>
<path d="M29.5 26.4 L29.5 13.8 A1.5 1.5 0 0 1 32.5 13.8 L32.5 26.4"/>
<path d="M27.5 28.6 L28.8 26.4 L33.2 26.4 L34.5 28.6"/>
</g>
<g stroke="#40d3f7" stroke-width="1.6" stroke-linecap="round">
<path d="M17.5 13 L17.5 18 M17.5 20.5 L17.5 21.5 M17.5 24 L17.5 26.6"/>
<path d="M22.5 13 L22.5 15 M22.5 18 L22.5 26.6"/>
</g></svg>
<div class="abs t" style="left:396px;top:601px;font-size:18px;line-height:18px;color:#747474;letter-spacing:-0.85px">sxscada00000003_lxj4</div>
<div class="abs t" style="left:396px;top:639.5px;font-size:18px;line-height:18px;color:#1890ff;letter-spacing:-0.35px;">离心机4</div>
<div class="abs" style="left:600px;top:646px;width:8px;height:8px;border-radius:50%;background:#008000"></div>
<div class="abs t" style="left:611px;top:640.8px;font-size:15px;line-height:15px;color:#666;">在线</div>
<div class="abs" style="left:631px;top:661px;width:10px;height:162px;background:#f6f6f6;border-radius:4px"></div>
<div class="abs" style="left:631px;top:661px;width:10px;height:57px;background:#c8c8c8;border-radius:4px"></div>
<svg style="left:336px;top:672.0px" width="15" height="15" viewBox="0 0 15 15">
<circle cx="7.5" cy="7.5" r="6.8" fill="#e6f7ff" stroke="#1890ff" stroke-width="1.2"/>
<path d="M4.4 5.5 L4.4 6.6 M10.6 5.5 L10.6 6.6" stroke="#1890ff" stroke-width="1.2" stroke-linecap="round"/>
<path d="M5.1 8.5 C5.6 10.6 9.4 10.6 9.9 8.5" fill="none" stroke="#1890ff" stroke-width="1.2" stroke-linecap="round"/></svg>
<div class="abs t" style="left:361px;top:672.9px;font-size:15px;line-height:15px;color:#595959;">出水温度设定</div>
<div class="abs t" style="left:439px;top:672.5px;width:100px;text-align:right;font-size:15px;line-height:15px;color:#6b6b6b;letter-spacing:-0.3px">7.007778</div>
<div class="abs t" style="left:549px;top:672.3px;font-size:15px;line-height:15px;color:#1890ff;letter-spacing:1.2px">下发</div>
<div class="abs" style="left:585px;top:673.0px;width:1px;height:15px;background:#3d8cff"></div>
<div class="abs t" style="left:589px;top:672.3px;font-size:15px;line-height:15px;color:#1890ff;letter-spacing:1.2px">历史</div>
<div class="abs" style="left:336px;top:699.0px;width:295px;height:1px;background:#e8e8e8"></div>
<svg style="left:336px;top:710.67px" width="15" height="15" viewBox="0 0 15 15">
<circle cx="7.5" cy="7.5" r="6.8" fill="#e6f7ff" stroke="#1890ff" stroke-width="1.2"/>
<path d="M4.4 5.5 L4.4 6.6 M10.6 5.5 L10.6 6.6" stroke="#1890ff" stroke-width="1.2" stroke-linecap="round"/>
<path d="M5.1 8.5 C5.6 10.6 9.4 10.6 9.9 8.5" fill="none" stroke="#1890ff" stroke-width="1.2" stroke-linecap="round"/></svg>
<div class="abs t" style="left:361px;top:711.6px;font-size:15px;line-height:15px;color:#595959;">电机功率百分比</div>
<div class="abs t" style="left:439px;top:711.2px;width:100px;text-align:right;font-size:15px;line-height:15px;color:#6b6b6b;letter-spacing:-0.3px">0.0</div>
<div class="abs t" style="left:549px;top:711.0px;font-size:15px;line-height:15px;color:#1890ff;letter-spacing:1.2px">下发</div>
<div class="abs" style="left:585px;top:711.7px;width:1px;height:15px;background:#3d8cff"></div>
<div class="abs t" style="left:589px;top:711.0px;font-size:15px;line-height:15px;color:#1890ff;letter-spacing:1.2px">历史</div>
<div class="abs" style="left:336px;top:737.7px;width:295px;height:1px;background:#e8e8e8"></div>
<svg style="left:336px;top:749.34px" width="15" height="15" viewBox="0 0 15 15">
<circle cx="7.5" cy="7.5" r="6.8" fill="#e6f7ff" stroke="#1890ff" stroke-width="1.2"/>
<path d="M4.4 5.5 L4.4 6.6 M10.6 5.5 L10.6 6.6" stroke="#1890ff" stroke-width="1.2" stroke-linecap="round"/>
<path d="M5.1 8.5 C5.6 10.6 9.4 10.6 9.9 8.5" fill="none" stroke="#1890ff" stroke-width="1.2" stroke-linecap="round"/></svg>
<div class="abs t" style="left:361px;top:750.2px;font-size:15px;line-height:15px;color:#595959;">机组开关机设定</div>
<div class="abs t" style="left:439px;top:749.8px;width:100px;text-align:right;font-size:15px;line-height:15px;color:#6b6b6b;letter-spacing:-0.3px">0.0</div>
<div class="abs t" style="left:549px;top:749.6px;font-size:15px;line-height:15px;color:#1890ff;letter-spacing:1.2px">下发</div>
<div class="abs" style="left:585px;top:750.3px;width:1px;height:15px;background:#3d8cff"></div>
<div class="abs t" style="left:589px;top:749.6px;font-size:15px;line-height:15px;color:#1890ff;letter-spacing:1.2px">历史</div>
<div class="abs" style="left:336px;top:776.3px;width:295px;height:1px;background:#e8e8e8"></div>
<svg style="left:336px;top:788.01px" width="15" height="15" viewBox="0 0 15 15">
<circle cx="7.5" cy="7.5" r="6.8" fill="#e6f7ff" stroke="#1890ff" stroke-width="1.2"/>
<path d="M4.4 5.5 L4.4 6.6 M10.6 5.5 L10.6 6.6" stroke="#1890ff" stroke-width="1.2" stroke-linecap="round"/>
<path d="M5.1 8.5 C5.6 10.6 9.4 10.6 9.9 8.5" fill="none" stroke="#1890ff" stroke-width="1.2" stroke-linecap="round"/></svg>
<div class="abs t" style="left:361px;top:788.9px;font-size:15px;line-height:15px;color:#595959;">冷冻水出水温度</div>
<div class="abs t" style="left:439px;top:788.5px;width:100px;text-align:right;font-size:15px;line-height:15px;color:#6b6b6b;letter-spacing:-0.3px">13.652466</div>
<div class="abs t" style="left:549px;top:788.3px;font-size:15px;line-height:15px;color:#1890ff;letter-spacing:1.2px">下发</div>
<div class="abs" style="left:585px;top:789.0px;width:1px;height:15px;background:#3d8cff"></div>
<div class="abs t" style="left:589px;top:788.3px;font-size:15px;line-height:15px;color:#1890ff;letter-spacing:1.2px">历史</div>
<div class="abs" style="left:336px;top:815.0px;width:295px;height:1px;background:#e8e8e8"></div>
<div class="abs" style="left:1725px;top:875px;width:40px;height:40px;border:1px solid #d9d9d9;border-radius:4px;background:#fff"></div>
<div class="abs" style="left:1775px;top:875px;width:40px;height:40px;border:1px solid #1890ff;border-radius:4px;background:#fff"></div>
<div class="abs" style="left:1825px;top:875px;width:40px;height:40px;border:1px solid #d9d9d9;border-radius:4px;background:#fff"></div>
<svg style="left:1741px;top:889px" width="8" height="13" viewBox="0 0 8 13"><path d="M7 0.8 L1.2 6.5 L7 12.2" fill="none" stroke="#bfbfbf" stroke-width="1.4"/></svg>
<svg style="left:1842px;top:889px" width="8" height="13" viewBox="0 0 8 13"><path d="M1 0.8 L6.8 6.5 L1 12.2" fill="none" stroke="#bfbfbf" stroke-width="1.4"/></svg>
<svg style="left:1790px;top:886px" width="10" height="16" viewBox="0 0 10 16"><path d="M2.2 3.6 L5.6 1.2 L5.6 14.2" fill="none" stroke="#1890ff" stroke-width="1.5"/></svg>
<div class="abs" style="left:1910px;top:0;width:10px;height:942px;background:#f1f1f1"></div>
<div class="abs" style="left:1910px;top:0;width:10px;height:837px;background:#c4c4c4"></div>
<div class="abs" style="left:1910px;top:0;width:10px;height:837px;background:linear-gradient(180deg,#bdbdbd 0px,#c6c6c6 60px,#c8c8c8 837px)"></div>
<div class="abs" style="left:1915px;top:0;width:6px;height:42px;background:#fff;border-radius:2px 0 0 2px;box-shadow:0 1px 4px rgba(0,0,0,.22)"></div>
<div class="abs" style="left:1907px;top:712px;width:14px;height:74px;background:#4b505c;border-radius:4px 0 0 4px;border:1px solid #3b3f48"><div class="abs" style="left:4px;top:8.50px;width:5.5px;height:1.3px;background:#363b45"></div><div class="abs" style="left:4px;top:10.98px;width:5.5px;height:1.3px;background:#363b45"></div><div class="abs" style="left:4px;top:13.46px;width:5.5px;height:1.3px;background:#363b45"></div><div class="abs" style="left:4px;top:15.94px;width:5.5px;height:1.3px;background:#363b45"></div><div class="abs" style="left:4px;top:18.42px;width:5.5px;height:1.3px;background:#363b45"></div><div class="abs" style="left:4px;top:20.90px;width:5.5px;height:1.3px;background:#363b45"></div><div class="abs" style="left:4px;top:23.38px;width:5.5px;height:1.3px;background:#363b45"></div><div class="abs" style="left:4px;top:25.86px;width:5.5px;height:1.3px;background:#d4b44c"></div><div class="abs" style="left:4px;top:28.34px;width:5.5px;height:1.3px;background:#d8bc4a"></div><div class="abs" style="left:4px;top:30.82px;width:5.5px;height:1.3px;background:#dcc44a"></div><div class="abs" style="left:4px;top:33.30px;width:5.5px;height:1.3px;background:#d6cc4c"></div><div class="abs" style="left:4px;top:35.78px;width:5.5px;height:1.3px;background:#c4cc52"></div><div class="abs" style="left:4px;top:38.26px;width:5.5px;height:1.3px;background:#b2ca58"></div><div class="abs" style="left:4px;top:40.74px;width:5.5px;height:1.3px;background:#a0c860"></div><div class="abs" style="left:4px;top:43.22px;width:5.5px;height:1.3px;background:#90c466"></div><div class="abs" style="left:4px;top:45.70px;width:5.5px;height:1.3px;background:#82c06e"></div><div class="abs" style="left:4px;top:48.18px;width:5.5px;height:1.3px;background:#74be78"></div><div class="abs" style="left:4px;top:50.66px;width:5.5px;height:1.3px;background:#66be84"></div><div class="abs" style="left:4px;top:53.14px;width:5.5px;height:1.3px;background:#58be92"></div><div class="abs" style="left:4px;top:55.62px;width:5.5px;height:1.3px;background:#4cc0a2"></div><div class="abs" style="left:4px;top:58.10px;width:5.5px;height:1.3px;background:#42c2b0"></div><div class="abs" style="left:4px;top:60.58px;width:5.5px;height:1.3px;background:#3cc4bc"></div><div class="abs" style="left:4px;top:63.06px;width:5.5px;height:1.3px;background:#38c6c6"></div></div>
<div class="abs" style="left:0;top:941px;width:1920px;height:1px;background:#111"></div>
</body>
</html>
